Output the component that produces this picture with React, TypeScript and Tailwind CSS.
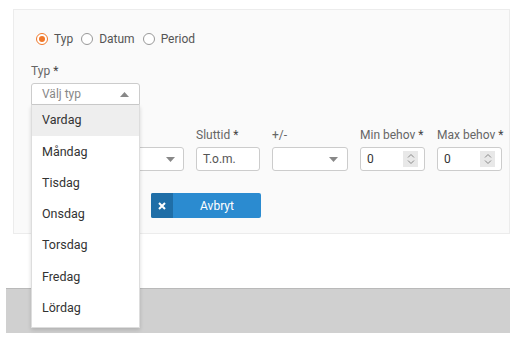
import React, { useState } from "react";

const days = ["Vardag", "Måndag", "Tisdag", "Onsdag", "Torsdag", "Fredag", "Lördag"];

const Radio = ({ label, checked }: { label: string; checked?: boolean }) => (
    <label className="flex items-center gap-[6px] text-[12px] text-[#555]">
        <span className={`flex h-[12px] w-[12px] items-center justify-center rounded-full border ${checked ? "border-[#f0782a]" : "border-[#999]"} bg-white`}>
            {checked && <span className="h-[6px] w-[6px] rounded-full bg-[#f0782a]"></span>}
        </span>
        {label}
    </label>
);

const Caret = ({ up }: { up?: boolean }) => (
    <svg width="9" height="5" viewBox="0 0 9 5">
        {up ? <path d="M0 5 L4.5 0 L9 5 Z" fill="#888" /> : <path d="M0 0 L4.5 5 L9 0 Z" fill="#888" />}
    </svg>
);

const Label = ({ text, req }: { text: string; req?: boolean }) => (
    <div className="h-[14px] text-[12px] leading-[14px] text-[#666]">
        {text}
        {req && <span className="ml-[3px] text-[#444]">*</span>}
    </div>
);

const NumberField = () => (
    <div className="flex h-[24px] w-[65px] items-center justify-between rounded-[3px] border border-[#ccc] bg-white pl-[6px] pr-[6px] text-[12px] text-[#333]">
        <span>0</span>
        <span className="flex h-[16px] w-[15px] items-center justify-center bg-[#e8e8e8]">
            <svg width="8" height="12" viewBox="0 0 8 12" fill="none" stroke="#888" strokeWidth="1">
                <path d="M1 4.5 L4 1.5 L7 4.5" />
                <path d="M1 7.5 L4 10.5 L7 7.5" />
            </svg>
        </span>
    </div>
);

export default function App() {
    const [open] = useState(true);

    return (
        <div className="h-[344px] w-[520px] overflow-hidden bg-white" style={{ fontFamily: "Roboto, 'Liberation Sans', sans-serif" }}>
            {/* Form panel */}
            <div className="ml-[13px] mt-[9px] w-[497px] border border-[#ececec] bg-[#fafafa] pb-[15px] pl-[17px] pt-[21px]">
                <div className="ml-[5px] flex h-[16px] items-center gap-[8px]">
                    <Radio label="Typ" checked />
                    <Radio label="Datum" />
                    <Radio label="Period" />
                </div>

                <div className="mt-[17px]">
                    <Label text="Typ" req />
                </div>

                {/* Typ select, open */}
                <div className="relative z-10 mt-[5px] w-[109px]">
                    <div className="flex h-[22px] items-center justify-between rounded-t-[3px] border border-[#ccc] bg-white pl-[10px] pr-[10px] text-[12px] text-[#888]">
                        <span>Välj typ</span>
                        <Caret up />
                    </div>
                    {open && (
                        <div className="absolute left-0 top-full w-full border border-t-0 border-[#ddd] bg-white pb-[3px] shadow-[0_2px_4px_rgba(0,0,0,0.15)]">
                            {days.map((d, i) => (
                                <div key={d} className={`flex h-[31.3px] items-center pl-[10px] text-[12.5px] text-[#333] ${i === 0 ? "bg-[#eeeeee]" : ""}`}>
                                    {d}
                                </div>
                            ))}
                        </div>
                    )}
                </div>

                {/* Time row */}
                <div className="mt-[23px] flex gap-[12px]">
                    <div>
                        <div className="h-[14px]"></div>
                        <div className="mt-[5px] flex h-[24px] w-[153px] items-center justify-end rounded-[3px] border border-[#ccc] bg-white pr-[8px]">
                            <Caret />
                        </div>
                    </div>
                    <div>
                        <Label text="Sluttid" req />
                        <div className="mt-[5px] flex h-[24px] w-[64px] items-center rounded-[3px] border border-[#ccc] bg-white pl-[6px] text-[12px] text-[#555]">
                            T.o.m.
                        </div>
                    </div>
                    <div>
                        <Label text="+/-" />
                        <div className="mt-[5px] flex h-[24px] w-[76px] items-center justify-end rounded-[3px] border border-[#ccc] bg-white pr-[9px]">
                            <Caret />
                        </div>
                    </div>
                    <div>
                        <Label text="Min behov" req />
                        <div className="mt-[5px]"><NumberField /></div>
                    </div>
                    <div>
                        <Label text="Max behov" req />
                        <div className="mt-[5px]"><NumberField /></div>
                    </div>
                </div>

                {/* Buttons */}
                <div className="ml-[120px] mt-[22px] flex">
                    <button className="flex h-[25px] w-[110px] overflow-hidden rounded-[2px] bg-[#2b8bd0] text-[12px] text-white">
                        <span className="flex h-full w-[22px] items-center justify-center bg-[#1f6ea7]">
                            <svg width="8" height="8" viewBox="0 0 8 8" stroke="white" strokeWidth="2">
                                <path d="M1 1 L7 7 M7 1 L1 7" />
                            </svg>
                        </span>
                        <span className="flex flex-1 items-center justify-center">Avbryt</span>
                    </button>
                </div>
            </div>

            {/* Footer bar */}
            <div className="ml-[6px] mt-[54px] h-[45px] w-[504px] border-t border-[#b9b9b9] bg-[#d0d0d0]"></div>
        </div>
    );
}
